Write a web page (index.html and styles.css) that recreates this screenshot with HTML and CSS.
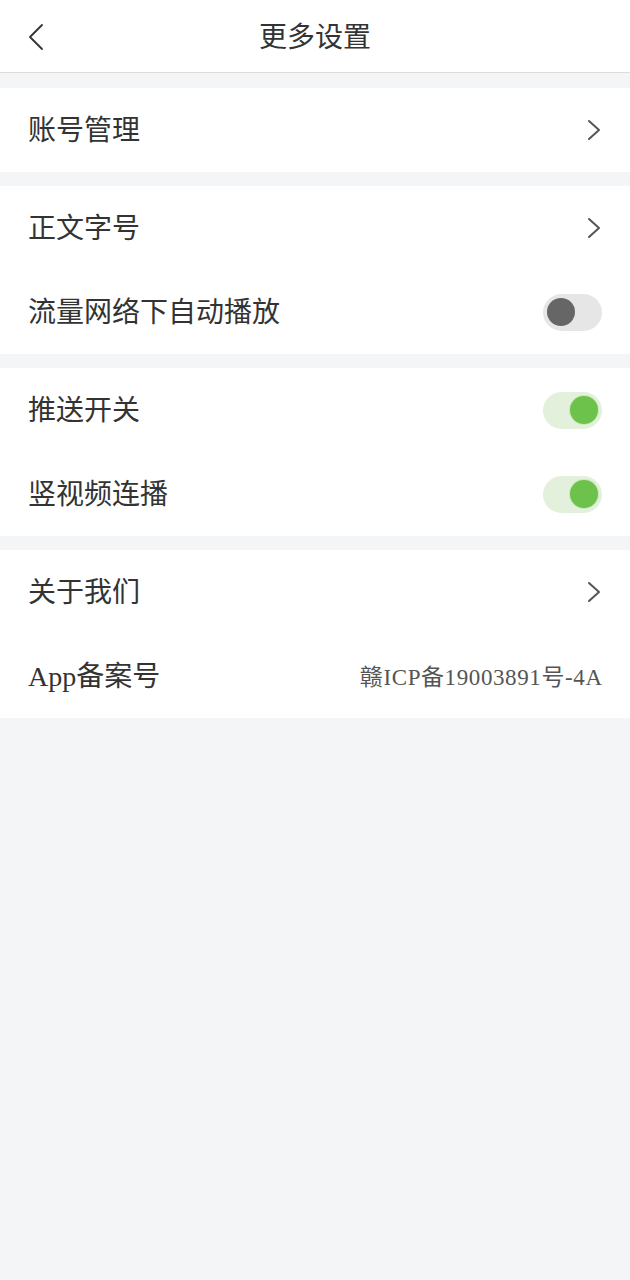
FILE: index.html
```html
<!DOCTYPE html>
<html lang="zh-CN">
<head>
<meta charset="utf-8">
<title>更多设置</title>
<link rel="stylesheet" href="styles.css">
</head>
<body>
<div class="page">
  <header class="topbar">
    <span class="back">
      <svg width="18" height="28" viewBox="0 0 18 28"><path d="M15 2 L3 14 L15 26" fill="none" stroke="#333" stroke-width="1.8" stroke-linecap="round" stroke-linejoin="round"/></svg>
    </span>
    <h1 class="title">更多设置</h1>
  </header>

  <section class="group">
    <div class="row"><span class="label">账号管理</span><span class="arrow"><svg width="14" height="22" viewBox="0 0 14 22"><path d="M2 2 L12 11 L2 20" fill="none" stroke="#555" stroke-width="2" stroke-linecap="round" stroke-linejoin="round"/></svg></span></div>
  </section>

  <section class="group">
    <div class="row"><span class="label">正文字号</span><span class="arrow"><svg width="14" height="22" viewBox="0 0 14 22"><path d="M2 2 L12 11 L2 20" fill="none" stroke="#555" stroke-width="2" stroke-linecap="round" stroke-linejoin="round"/></svg></span></div>
    <div class="row"><span class="label">流量网络下自动播放</span><span class="switch off"><span class="knob"></span></span></div>
  </section>

  <section class="group">
    <div class="row"><span class="label">推送开关</span><span class="switch on"><span class="knob"></span></span></div>
    <div class="row"><span class="label">竖视频连播</span><span class="switch on"><span class="knob"></span></span></div>
  </section>

  <section class="group">
    <div class="row"><span class="label">关于我们</span><span class="arrow"><svg width="14" height="22" viewBox="0 0 14 22"><path d="M2 2 L12 11 L2 20" fill="none" stroke="#555" stroke-width="2" stroke-linecap="round" stroke-linejoin="round"/></svg></span></div>
    <div class="row"><span class="label">App备案号</span><span class="value">赣ICP备19003891号-4A</span></div>
  </section>
</div>
</body>
</html>
```
FILE: styles.css
```css
html, body {
  margin: 0;
  padding: 0;
  background: #f4f5f7;
}
body {
  font-family: "Liberation Serif", "Noto Sans CJK SC", serif;
  color: #333;
}
.page {
  width: 630px;
  min-height: 1280px;
  background: #f4f5f7;
}
.topbar {
  height: 72px;
  background: #fff;
  border-bottom: 1px solid #dcdcdc;
  display: flex;
  align-items: center;
  justify-content: center;
  position: relative;
}
.back {
  position: absolute;
  left: 27px;
  top: 23px;
  display: flex;
}
.title {
  margin: 4px 0 0 0;
  font-size: 28px;
  font-weight: normal;
  color: #333;
  line-height: 1;
}
.group {
  background: #fff;
  margin-top: 14px;
}
.group:first-of-type {
  margin-top: 15px;
}
.row {
  height: 84px;
  display: flex;
  align-items: center;
  justify-content: space-between;
  padding: 2px 28px 0 28px;
  box-sizing: border-box;
}
.label {
  font-size: 28px;
  line-height: 1;
  color: #333;
}
.arrow {
  display: flex;
  margin-right: 1px;
  margin-top: -2px;
}
.value {
  font-size: 23px;
  letter-spacing: 0.6px;
  margin-right: -0.6px;
  color: #555;
  line-height: 1;
}
.switch {
  width: 59px;
  height: 37px;
  border-radius: 19px;
  display: flex;
  align-items: center;
  padding: 0 4px;
  box-sizing: border-box;
  margin-top: -2px;
}
.switch .knob {
  width: 28px;
  height: 28px;
  border-radius: 50%;
}
.switch.off {
  background: #e6e6e6;
  justify-content: flex-start;
}
.switch.off .knob {
  background: #666;
}
.switch.on {
  background: #e2f0dc;
  justify-content: flex-end;
}
.switch.on .knob {
  background: #6cc24a;
  box-shadow: 0 0 0 1px #c9e8bb;
}
```
